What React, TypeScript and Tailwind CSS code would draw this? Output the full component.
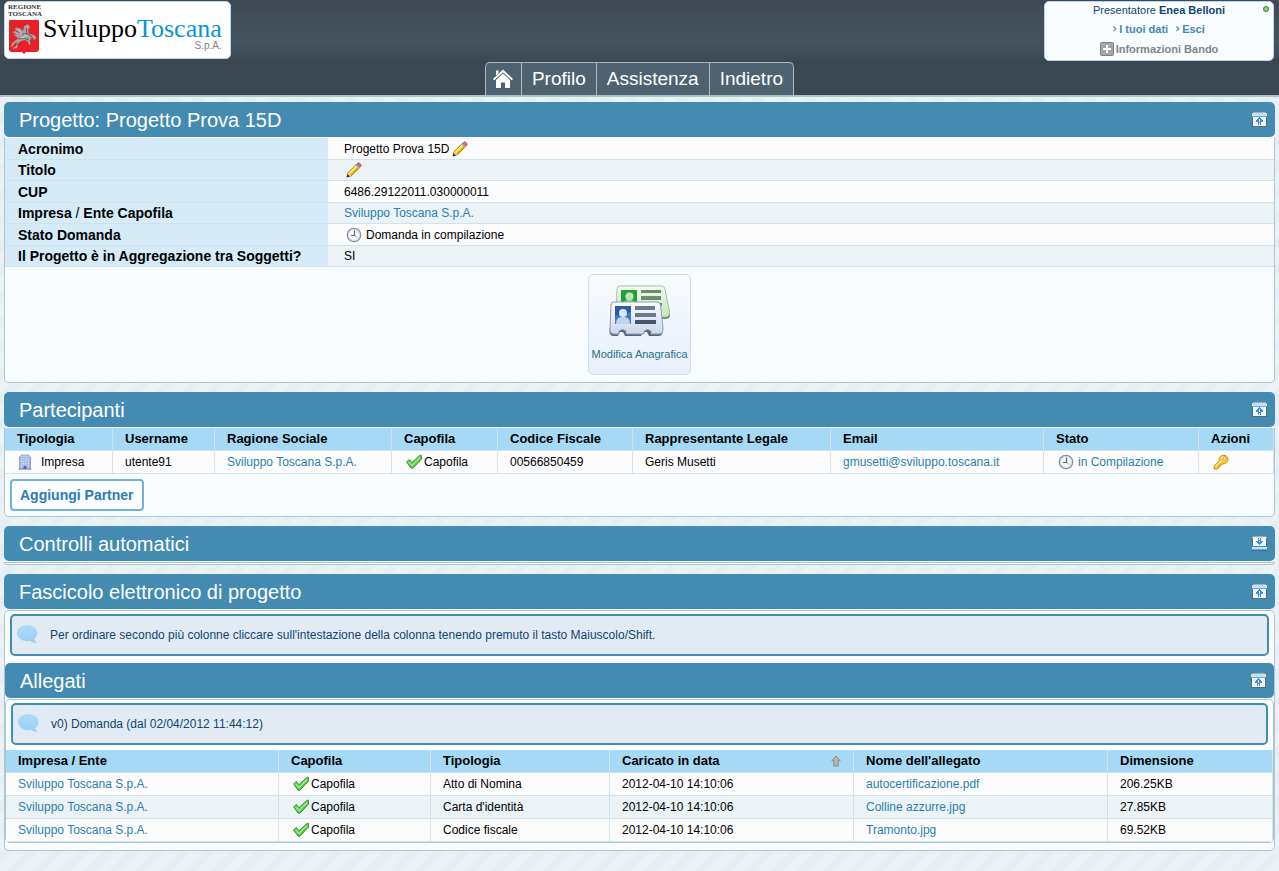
import type { ReactNode } from "react";
import clsx from "clsx";

const LINK = "text-[#2a80ae] hover:underline";

function PencilIcon() {
  return (
    <svg width="16" height="16" viewBox="0 0 16 16" className="shrink-0" aria-hidden>
      <path d="M1.200 14.800 2.200 10.600 10.200 2.600 13.400 5.800 5.400 13.800Z" fill="#f5c81c" stroke="#9c7215" strokeWidth=".9" />
      <path d="M3.600 11 11 3.600" stroke="#fff08a" strokeWidth="1.500" />
      <path d="M5 12.800 12.600 5.200" stroke="#d99a10" strokeWidth="1" />
      <path d="m10.300 2.600 1.500-1.500c.6-.5 1.200-.5 1.700 0l1.400 1.400c.5.5.5 1.100 0 1.700l-1.500 1.500Z" fill="#e0635e" stroke="#8d5552" strokeWidth=".6" />
      <path d="m9.400 3.400 3.200 3.200 1-1-3.200-3.200Z" fill="#a7b2b9" />
      <path d="m1 15 1.200-4.200 3 3Z" fill="#f6cfa4" />
      <path d="m.5 15.500 1-3.500 2.400 2.400Z" fill="#33251c" />
    </svg>
  );
}

function ClockIcon() {
  return (
    <svg width="16" height="16" viewBox="0 0 16 16" className="shrink-0" aria-hidden>
      <circle cx="8" cy="8" r="6.700" fill="#f5f8fc" stroke="#8a9098" strokeWidth="1.300" />
      <circle cx="8" cy="8" r="5.500" fill="none" stroke="#ccd9ec" strokeWidth="1" />
      <path d="M8.500 3.500v5H5" fill="none" stroke="#5e6771" strokeWidth="1.200" />
      <path d="m8.600 8.600 2.600 1.900" stroke="#8f9cae" strokeWidth=".9" />
    </svg>
  );
}

function CheckIcon() {
  return (
    <svg width="16" height="16" viewBox="0 0 16 16" className="shrink-0" aria-hidden>
      <path d="M.6 8 3.200 5.400 6 8.600 14.200 1.200l1.200.2.100 3.600L7 14.200H5.200Z" fill="#5bd04b" stroke="#2a8a2c" strokeWidth=".9" strokeLinejoin="round" />
      <path d="m2.400 7.800 3.600 3.700L14 3.500" fill="none" stroke="#a0ef8c" strokeWidth="1.200" />
    </svg>
  );
}

function BuildingIcon() {
  return (
    <svg width="16" height="16" viewBox="0 0 16 16" className="shrink-0" aria-hidden>
      <path d="M4 1h8v2h1.500v12h-11V3H4Z" fill="#9fb6e0" stroke="#8499c4" strokeWidth=".8" />
      <path d="M4.500 4v9M6.700 4v9M9 4v9M11.300 4v9" stroke="#d3e0f6" strokeWidth="1.300" strokeDasharray="1.500 1" />
      <path d="M6.500 12h3v3h-3Z" fill="#56698f" />
      <path d="M1 15.300h14" stroke="#8b96ad" strokeWidth=".8" />
      <path d="M4.400 2.200h7.200" stroke="#d6e2f6" strokeWidth=".9" />
    </svg>
  );
}

function KeyIcon() {
  return (
    <svg width="16" height="16" viewBox="0 0 16 16" className="shrink-0" aria-hidden>
      <path
        d="M6.300 6.700C5.600 3.800 7.600 1.200 10.600 1.200c2.600 0 4.400 1.800 4.400 4.200 0 2.900-2.500 4.900-5.300 4.300L8.400 11H7v1.400H5.600v1.500L4.300 15H1.200v-3Z"
        fill="#f5cc3d"
        stroke="#b5830f"
        strokeWidth=".9"
      />
      <circle cx="11.400" cy="4.600" r="1.500" fill="#fff" stroke="#b5830f" strokeWidth=".7" />
      <path d="M2.200 12.600 7.600 7.200M8 4.600c.3-1.200 1.100-2 2.400-2.200" fill="none" stroke="#fff1a6" strokeWidth="1" />
    </svg>
  );
}

function HomeIcon() {
  return (
    <svg width="20" height="20" viewBox="0 0 20 20" aria-hidden>
      <path d="M10 .5 0 10l1.300 1.200L10 3.200l8.700 8L20 10Z" fill="#fff" />
      <path d="m10 4.600-7 6.500V19h5v-5.500h4V19h5v-7.900Z" fill="#fff" />
      <path d="M3 1.500h2.500v2.700L3 6.500Z" fill="#fff" />
    </svg>
  );
}

function ToggleIcon({ open }: { open: boolean }) {
  return (
    <svg width="15" height="15" viewBox="0 0 15 15" shapeRendering="crispEdges" aria-hidden>
      <path d="M0 0h15v15H0Z" fill="#4d6c84" />
      <path d="M1 1h13v13H1Z" fill="#f4f5f6" />
      <path d="M1 0h13v1H1Z" fill="#a9adb1" />
      {open ? (
        <>
          <path d="M0 1h15v3H0Z" fill="#c3e0f9" />
          <path d="M0 4h15v1H0Z" fill="#68aae6" />
          <path d="M7 5h1v1h1v1h1v1h1v2H9v3H8v-2H7v2H6v-3H4V8h1V7h1V6h1Z" fill="#3d8fdc" />
          <path d="M7 7h1v3H7Z" fill="#dcecfb" />
        </>
      ) : (
        <>
          <path d="M0 1h15v1H0Z" fill="#dfe2e5" />
          <path d="M0 10h15v1H0Z" fill="#3d8fdc" />
          <path d="M0 11h15v2H0Z" fill="#c3e0f9" />
          <path d="M0 13h15v1H0Z" fill="#68aae6" />
          <path d="M6 2h1v2h1V2h1v3h2v1h-1v1H9v1H8v1H7V8H6V7H5V6H4V5h2Z" fill="#3d8fdc" />
          <path d="M7 5h1v1H7Z" fill="#dcecfb" />
        </>
      )}
    </svg>
  );
}

function BubbleIcon() {
  return (
    <svg width="21" height="20" viewBox="0 0 21 20" className="shrink-0" aria-hidden>
      <defs>
        <linearGradient id="bubble" x1="0" y1="0" x2="0" y2="1">
          <stop offset="0" stopColor="#addcf7" />
          <stop offset="1" stopColor="#98cff8" />
        </linearGradient>
      </defs>
      <path d="M10.200 0C16 0 20.500 3.600 20.500 8c0 2.500-1.300 4.800-3.300 6.200.5 1.600 1.500 2.700 2.800 3.700-2.800.2-5.200-.6-6.900-2.100-1 .3-2 .4-2.900.4C4.500 16.200 0 12.400 0 8s4.500-8 10.200-8Z" fill="url(#bubble)" />
    </svg>
  );
}

function CardsIcon() {
  return (
    <svg width="64" height="56" viewBox="0 0 64 56" aria-hidden>
      <defs>
        <linearGradient id="cardBack" x1="0" y1="0" x2="0" y2="1">
          <stop offset="0" stopColor="#f2fbf1" />
          <stop offset="1" stopColor="#bfe6bb" />
        </linearGradient>
        <linearGradient id="cardFront" x1="0" y1="0" x2="0" y2="1">
          <stop offset="0" stopColor="#fbfdff" />
          <stop offset="1" stopColor="#cbd7ea" />
        </linearGradient>
      </defs>
      <path d="M11 5h43q3 0 3 3l5 25q0 4-5 4H10l-2-9Z" fill="#6c7f70" />
      <path d="M11.500 4h42q3 0 3.500 3l4.500 23q0 5-4 5H8l1-28q.5-3 2.500-3Z" fill="url(#cardBack)" stroke="#a4bfa4" />
      <path d="M13 8h16v14H13Z" fill="#22a03c" />
      <circle cx="21.500" cy="14.500" r="4" fill="#bfe6bb" />
      <path d="M14 22c1-5 13-5 14 0Z" fill="#a9dca8" />
      <path d="M33 8h20v3H33ZM33 14h20v4H33ZM38 21h16v3H38Z" fill="#6f8a73" />
      <path d="M6 21h44l5 26q0 7-4 7H41l-2-4h-4l-2 4H17l-2-4h-3l-2 4H6q-5 0-4.500-6Z" fill="#596575" />
      <path d="M6 20h43q3 0 3.500 3L55 46q.3 6-4 6h-8v-3q-3.500-3-7 0v3H18v-3q-3.500-3-7 0v3H6q-4.500 0-4-6L3 23q.3-3 3-3Z" fill="url(#cardFront)" stroke="#8f9cb2" />
      <path d="M7 24h16v18H7Z" fill="#3d7cc7" />
      <path d="M7 24h16v6L7 34Z" fill="#285ea8" />
      <circle cx="15" cy="31" r="4" fill="#d9e7f8" />
      <path d="M8 42c0-6 3-7 7-7s7 1 7 7Z" fill="#bcd3ef" />
      <path d="M27 24h20v4H27ZM27 31h21v4H27Z" fill="#6b7890" />
      <path d="M27 38h21v4H27Z" fill="#47536b" />
    </svg>
  );
}

function Crest() {
  return (
    <svg width="32" height="35" viewBox="0 0 32 35" className="block" aria-hidden>
      <path d="M1 1q0-1 1-1h28q1 0 1 1v28q0 3-3 3H18l-2 2-2-2H4q-3 0-3-3Z" fill="#ea1f27" />
      <path d="M7 8c3-1 6 0 8 3l1-4c1-2 3-3 5-2l1 3-2 1 1 5c3 0 6 1 7 3l-1 3-2-1-2-1-1 3 1 3-2 1-1-3-3-2-4 1-3 3-1 4-4 1v-1l3-2 1-4-2 1-2 3-2 1 1-4 4-3 3-2-4-1 2-1-4-1 3-1-4-2 4-1Z" fill="#aaa3a1" />
      <path d="M14 14c4-1 7 1 9 2l2 3M11 19l5-1 5 2M18 8l1 6M8 11l5 2M9 25l3-3M22 20l1 4" stroke="#655e5d" strokeWidth="1" fill="none" />
      <path d="m10 10 4 4M16 15l4 1M13 18l4-1" stroke="#e4dfdd" strokeWidth=".8" fill="none" />
    </svg>
  );
}

function SortUpIcon() {
  return (
    <svg width="10" height="12" viewBox="0 0 10 12" className="shrink-0" aria-hidden>
      <path d="M5 1 .8 5.500h2V11h4.400V5.500h2Z" fill="#b5b5b5" stroke="#8a8583" strokeWidth=".9" />
    </svg>
  );
}

function ChevronMark() {
  return (
    <svg width="4" height="6" viewBox="0 0 4 6" aria-hidden>
      <path d="m.5.500 2.300 2.300L.5 5.100" fill="none" stroke="#4d8cb0" strokeWidth="1.200" />
    </svg>
  );
}

/** Titled block with a rounded bar on top and a bordered body under it. */
function Panel({ title, open = true, children }: { title: string; open?: boolean; children?: ReactNode }) {
  return (
    <section>
      <header className="flex h-[35px] items-center justify-between rounded-[5px] bg-[#448bb2] pr-2 pl-[15px]">
        <h2 className="text-xl text-white">{title}</h2>
        <button type="button" aria-expanded={open} aria-label={`${open ? "Chiudi" : "Apri"} ${title}`}>
          <ToggleIcon open={open} />
        </button>
      </header>
      {children}
    </section>
  );
}

function Message({ children }: { children: ReactNode }) {
  return (
    <div className="mx-[5px] mt-[3px] flex h-[42px] items-center gap-3 rounded-[5px] border-2 border-[#448bb2] bg-[#e2ebf4] pl-[5px] text-xs text-[#0f4672]">
      <BubbleIcon />
      <p>{children}</p>
    </div>
  );
}

type Column = { label: string; width: string; sorted?: boolean };

function DataTable({ columns, rows }: { columns: Column[]; rows: ReactNode[][] }) {
  return (
    <table className="w-full table-fixed border-separate border-spacing-0 text-left text-xs">
      <thead>
        <tr className="bg-[#a5d9f5]">
          {columns.map((c) => (
            <th
              key={c.label}
              scope="col"
              className={clsx("h-[23px] border-r border-b border-[#cfe3ec] px-3 text-[13px] leading-5 font-bold", c.width)}
            >
              <span className="flex items-center justify-between">
                {c.label}
                {c.sorted && <SortUpIcon />}
              </span>
            </th>
          ))}
        </tr>
      </thead>
      <tbody>
        {rows.map((row, i) => (
          <tr key={i} className="bg-[#fcfcfd] even:bg-[#ebf3f7]">
            {row.map((cell, j) => (
              <td key={j} className="h-[23px] border-r border-b border-[#cfe3ec] px-3 whitespace-nowrap">
                {cell}
              </td>
            ))}
          </tr>
        ))}
      </tbody>
    </table>
  );
}

function Capofila() {
  return (
    <span className="flex items-center gap-0.5 pl-0.5">
      <CheckIcon />
      Capofila
    </span>
  );
}

function CompanyLink() {
  return (
    <a href="#impresa" className={LINK}>
      Sviluppo Toscana S.p.A.
    </a>
  );
}

const details: { label: ReactNode; value: ReactNode }[] = [
  {
    label: "Acronimo",
    value: (
      <span className="flex items-center gap-[3px]">
        Progetto Prova 15D
        <button type="button" aria-label="Modifica acronimo">
          <PencilIcon />
        </button>
      </span>
    ),
  },
  {
    label: "Titolo",
    value: (
      <button type="button" aria-label="Modifica titolo" className="ml-0.5 block">
        <PencilIcon />
      </button>
    ),
  },
  { label: "CUP", value: "6486.29122011.030000011" },
  {
    label: (
      <>
        Impresa <span className="font-normal">/</span> Ente Capofila
      </>
    ),
    value: <CompanyLink />,
  },
  {
    label: "Stato Domanda",
    value: (
      <span className="flex items-center gap-1 pl-0.5">
        <ClockIcon />
        Domanda in compilazione
      </span>
    ),
  },
  { label: "Il Progetto è in Aggregazione tra Soggetti?", value: "SI" },
];

const partnerColumns: Column[] = [
  { label: "Tipologia", width: "w-[108px]" },
  { label: "Username", width: "w-[102px]" },
  { label: "Ragione Sociale", width: "w-[177px]" },
  { label: "Capofila", width: "w-[106px]" },
  { label: "Codice Fiscale", width: "w-[135px]" },
  { label: "Rappresentante Legale", width: "w-[198px]" },
  { label: "Email", width: "w-[213px]" },
  { label: "Stato", width: "w-[155px]" },
  { label: "Azioni", width: "w-[75px]" },
];

const partnerRows: ReactNode[][] = [
  [
    <span className="flex items-center gap-2">
      <BuildingIcon />
      Impresa
    </span>,
    "utente91",
    <CompanyLink />,
    <Capofila />,
    "00566850459",
    "Geris Musetti",
    <a href="mailto:gmusetti@sviluppo.toscana.it" className={LINK}>
      gmusetti@sviluppo.toscana.it
    </a>,
    <a href="#stato" className={clsx("flex items-center gap-1 pl-0.5", LINK)}>
      <ClockIcon />
      in Compilazione
    </a>,
    <button type="button" aria-label="Credenziali" className="ml-0.5 block">
      <KeyIcon />
    </button>,
  ],
];

const fileColumns: Column[] = [
  { label: "Impresa / Ente", width: "w-[273px]" },
  { label: "Capofila", width: "w-[152px]" },
  { label: "Tipologia", width: "w-[179px]" },
  { label: "Caricato in data", width: "w-[244px]", sorted: true },
  { label: "Nome dell'allegato", width: "w-[254px]" },
  { label: "Dimensione", width: "w-[165px]" },
];

const files = [
  { kind: "Atto di Nomina", name: "autocertificazione.pdf", size: "206.25KB" },
  { kind: "Carta d'identità", name: "Colline azzurre.jpg", size: "27.85KB" },
  { kind: "Codice fiscale", name: "Tramonto.jpg", size: "69.52KB" },
];

const fileRows: ReactNode[][] = files.map((f) => [
  <CompanyLink />,
  <Capofila />,
  f.kind,
  "2012-04-10 14:10:06",
  <a href="#allegato" className={LINK}>
    {f.name}
  </a>,
  f.size,
]);

function TopBar() {
  return (
    <header className="border-b-2 border-[#adc3cb] bg-[linear-gradient(to_bottom,#3e4952,#46545f_45%,#3b4750_65%)]">
      <div className="flex items-start justify-between px-1 pt-px pr-[5px]">
        <a
          href="#home"
          className="flex h-[58px] w-[227px] items-start gap-[3px] rounded-[5px] border border-[#b4d3f2] bg-white pl-[3px]"
        >
          <div className="w-8 shrink-0 pt-0.5">
            <div className="mb-0.5 text-center font-['Liberation_Serif',serif] text-[7px] leading-[7px] font-bold whitespace-nowrap text-[#333]">
              REGIONE
              <br />
              TOSCANA
            </div>
            <Crest />
          </div>
          <div className="pt-[14px]">
            <div className="font-['Liberation_Serif',serif] text-[26px] leading-[26px] text-black">
              Sviluppo<span className="text-[#0795d9]">Toscana</span>
            </div>
            <div className="text-right text-[10px] leading-[8px] text-[#808080]">S.p.A.</div>
          </div>
        </a>

        <div className="relative w-[230px] rounded-[5px] border border-[#b4d3f2] bg-[#fafdff] pb-px text-center text-[11px] text-[#0f4672]">
          <span className="absolute top-1 right-1 size-[6px] rounded-full border border-[#3d7d3a] bg-[#8bd67c]" />
          <p className="h-[17px] leading-[17px]">
            Presentatore <b>Enea Belloni</b>
          </p>
          <p className="flex h-5 items-center justify-center gap-2 font-bold text-[#3f88b0]">
            <a href="#dati" className="flex items-center gap-0.5">
              <ChevronMark />I tuoi dati
            </a>
            <a href="#esci" className="flex items-center gap-0.5">
              <ChevronMark />
              Esci
            </a>
          </p>
          <button type="button" className="mx-auto flex h-5 items-center gap-0.5 font-bold text-[#7e868a]">
            <svg width="14" height="14" viewBox="0 0 14 14" aria-hidden>
              <rect x=".5" y=".5" width="13" height="13" rx="1" fill="#a6a6a6" stroke="#808080" />
              <path d="M7 3v8M3 7h8" stroke="#fff" strokeWidth="2" />
            </svg>
            Informazioni Bando
          </button>
        </div>
      </div>
      <nav className="mt-px flex justify-center">
        <div className="flex h-[33px] divide-x divide-[#a3bdc8] rounded-t-[5px] border border-b-0 border-[#a3bdc8] bg-[#4f626f] text-[19px] text-white">
          <a href="#home" aria-label="Home" className="flex w-9 items-center justify-center">
            <HomeIcon />
          </a>
          {["Profilo", "Assistenza", "Indietro"].map((item) => (
            <a key={item} href="#nav" className="flex items-center px-2.5 pt-px">
              {item}
            </a>
          ))}
        </div>
      </nav>
    </header>
  );
}

export default function App() {
  return (
    <div className="min-h-screen bg-[repeating-linear-gradient(135deg,#eaf2f6_0px,#eaf2f6_8px,#e6eef4_10px,#e6eef4_16px,#eaf2f6_18px)] font-['Liberation_Sans',Arial,sans-serif] text-black">
      <TopBar />
      <main className="flex flex-col gap-[9px] px-1 pt-[5px] pb-5">
        <Panel title="Progetto: Progetto Prova 15D">
          <div className="rounded-b-[5px] border border-[#adc6d0] border-t-white bg-[#fafdff]">
            <table className="w-full border-separate border-spacing-0 text-left text-xs">
              <tbody>
                {details.map((d, i) => (
                  <tr key={i} className="h-[22px] bg-[#fcfcfd] even:h-[21px] even:bg-[#ebf3f7]">
                    <th scope="row" className="w-[323px] border-b border-[#cfe3ec] bg-[#d5ebf8] pl-[13px] text-[14px] leading-5">
                      {d.label}
                    </th>
                    <td className="border-b border-[#cfe3ec] pl-4">{d.value}</td>
                  </tr>
                ))}
              </tbody>
            </table>
            <button
              type="button"
              className="mx-auto my-[7px] flex h-[101px] w-[103px] flex-col items-center rounded-[5px] border border-[#cfe0ea] bg-linear-to-b from-[#f8fbff] to-[#e7effa] pt-[7px] text-[11px] whitespace-nowrap text-[#2c6f87]"
            >
              <CardsIcon />
              <span className="mt-2 leading-4">Modifica Anagrafica</span>
            </button>
          </div>
        </Panel>

        <Panel title="Partecipanti">
          <div className="rounded-b-[5px] border border-[#adc6d0] border-t-white bg-[#fafdff]">
            <DataTable columns={partnerColumns} rows={partnerRows} />
            <button
              type="button"
              className="m-[5px] block h-8 rounded-[4px] border-2 border-[#71b1dd] bg-[#fcfeff] px-2 text-[14px] font-bold text-[#2b7cb5]"
            >
              Aggiungi Partner
            </button>
          </div>
        </Panel>

        <Panel title="Controlli automatici" open={false}>
          <div className="mt-px h-[3px] rounded-b-[5px] border border-[#adc6d0] bg-[#fafdff]" />
        </Panel>

        <Panel title="Fascicolo elettronico di progetto">
          <div className="mt-px rounded-[5px] border border-[#adc6d0] bg-[#fafdff] pb-[7px]">
            <Message>Per ordinare secondo più colonne cliccare sull'intestazione della colonna tenendo premuto il tasto Maiuscolo/Shift.</Message>
            <div className="mt-[7px]">
              <Panel title="Allegati">
                <div className="mt-px rounded-[5px] border border-[#adc6d0] bg-[#fafdff]">
                  <Message>v0) Domanda (dal 02/04/2012 11:44:12)</Message>
                  <div className="mt-[5px]">
                    <DataTable columns={fileColumns} rows={fileRows} />
                  </div>
                </div>
              </Panel>
            </div>
          </div>
        </Panel>
      </main>
    </div>
  );
}
